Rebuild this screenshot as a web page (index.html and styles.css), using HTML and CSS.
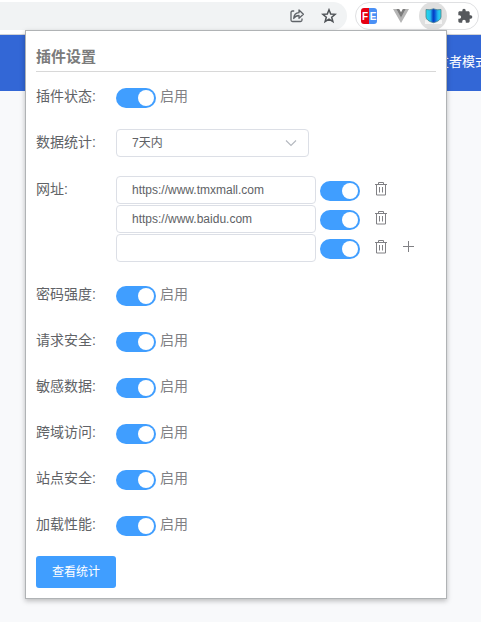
FILE: index.html
```html
<!DOCTYPE html>
<html lang="zh-CN">
<head>
<meta charset="utf-8">
<title>插件设置</title>
<link rel="stylesheet" href="styles.css">
</head>
<body>
<svg class="defs" width="0" height="0">
  <symbol id="trash" viewBox="0 0 14 14"><path d="M1 2.500h12M4.500 2.500v-2h5v2M2.500 2.500v10.500h9V2.500M5.500 5v5.500M8.500 5v5.500" fill="none" stroke="currentColor"/></symbol>
</svg>
<header class="toolbar">
  <div class="address">
    <svg width="16" height="16" viewBox="0 0 16 16" fill="none" stroke="#5f6368" stroke-width="1.3" stroke-linejoin="round"><path d="M5.200 3H3.500Q2 3 2 4.500v7.500Q2 13.500 3.500 13.500h8q1.500 0 1.500-1.500V10.500"/><path d="M4.700 10.500Q5 5 10 4.700V2L14.400 6.300 10 10.200V7.500Q6.600 7.500 4.700 10.500z"/></svg>
    <svg width="16" height="16" viewBox="0 0 16 16" fill="none" stroke="#505458" stroke-width="1.500"><path d="M8 1.800 9.700 6l4.500.3-3.500 2.900 1.200 4.500L8 11.200l-3.900 2.500 1.200-4.500L1.800 6.300 6.300 6z"/></svg>
  </div>
  <div class="extensions">
    <span class="fe"><b>F</b><b>E</b></span>
    <svg class="vue" width="16" height="14" viewBox="0 0 16 14"><path d="M0 0h3.300L8 8.500 12.700 0H16L8 14z" fill="#b5b5b5"/><path d="M3.200 0h3L8 3.200 9.800 0h3L8 8.700z" fill="#7d7d7d"/></svg>
    <span class="active-ext">
      <svg width="17" height="16" viewBox="0 0 17 16">
        <defs><linearGradient id="shade" gradientUnits="userSpaceOnUse" x1="1" y1="0" x2="16" y2="0"><stop offset="0" stop-color="#24dbe9"/><stop offset=".28" stop-color="#25bff0"/><stop offset=".48" stop-color="#063cc2"/><stop offset=".58" stop-color="#0754d4"/><stop offset=".8" stop-color="#24b9f0"/><stop offset="1" stop-color="#24dbe9"/></linearGradient></defs>
        <path d="M0 12h17v4H0z" fill="#f4f4f4"/><path d="M1 1.500Q5 2.500 8.500.8 12 2.500 16 1.500V9q-.5 4-7.500 5.700Q1.500 13 1 9z" fill="url(#shade)" stroke="#4b7e88" stroke-width=".8"/>
      </svg>
    </span>
    <svg class="puzzle" width="16" height="16" viewBox="0 0 24 24"><path d="M20.500 11H19V7c0-1.100-.9-2-2-2h-4V3.500a2.500 2.500 0 0 0-5 0V5H4c-1.100 0-2 .9-2 2v3.800h1.500a2.700 2.700 0 0 1 0 5.400H2V20c0 1.100.9 2 2 2h3.800v-1.500a2.700 2.700 0 0 1 5.400 0V22H17c1.100 0 2-.9 2-2v-4h1.500a2.500 2.500 0 0 0 0-5z" fill="#56595d"/></svg>
  </div>
</header>
<div class="banner"><span>开发者模式</span></div>

<main class="popup">
  <h1>插件设置</h1>
  <div class="row"><label>插件状态:</label><i class="switch"></i><span class="state">启用</span></div>
  <div class="row range"><label>数据统计:</label>
    <div class="field select"><span>7天内</span><svg width="12" height="12" viewBox="0 0 12 12" fill="none" stroke="#b4b8bf" stroke-width="1.100"><path d="M1 3.500 6 8.500l5-5"/></svg></div>
  </div>
  <div class="row sites"><label>网址:</label>
    <div class="site-list">
      <div class="site"><div class="field">https://www.tmxmall.com</div><i class="switch"></i><svg class="trash"><use href="#trash"/></svg></div>
      <div class="site"><div class="field">https://www.baidu.com</div><i class="switch"></i><svg class="trash"><use href="#trash"/></svg></div>
      <div class="site"><div class="field"></div><i class="switch"></i><svg class="trash"><use href="#trash"/></svg><svg class="plus" viewBox="0 0 12 12"><path d="M0 5.500h11M5.500 0v11" stroke="#808084"/></svg></div>
    </div>
  </div>
  <div class="row"><label>密码强度:</label><i class="switch"></i><span class="state">启用</span></div>
  <div class="row"><label>请求安全:</label><i class="switch"></i><span class="state">启用</span></div>
  <div class="row"><label>敏感数据:</label><i class="switch"></i><span class="state">启用</span></div>
  <div class="row"><label>跨域访问:</label><i class="switch"></i><span class="state">启用</span></div>
  <div class="row"><label>站点安全:</label><i class="switch"></i><span class="state">启用</span></div>
  <div class="row"><label>加载性能:</label><i class="switch"></i><span class="state">启用</span></div>
  <button>查看统计</button>
</main>
</body>
</html>
```
FILE: styles.css
```css
* { box-sizing: border-box; }
body {
  margin: 0;
  height: 622px;
  overflow: hidden;
  background: #f8f9fb;
  font-family: "Liberation Sans", "Noto Sans CJK SC", sans-serif;
}
.defs { position: absolute; }
svg { display: block; flex: none; }
.toolbar {
  display: flex;
  height: 35px;
  padding-top: 2px;
  background: #fff;
  border-bottom: 1px solid #d2d3d5;
}
.address {
  display: flex;
  justify-content: flex-end;
  gap: 16px;
  width: 347px;
  height: 28px;
  padding: 6px 10px 0 0;
  border-radius: 0 14px 14px 0;
  background: #f1f3f4;
}
.extensions {
  display: flex;
  align-items: center;
  width: 124px;
  height: 28px;
  margin-left: 8px;
  padding-left: 5px;
  border: 1px solid #dfe0e2;
  border-radius: 14px;
}
.fe {
  display: flex;
  width: 16px;
  height: 16px;
  border-radius: 3px;
  overflow: hidden;
  background: linear-gradient(90deg, #e60012 50%, #4a90f5 50%);
  color: #fff;
  font-size: 10px;
  line-height: 17px;
}
.fe b { width: 8px; text-align: center; }
.vue { margin-left: 16px; }
.active-ext {
  display: flex;
  align-items: center;
  justify-content: center;
  width: 28px;
  height: 28px;
  margin-left: 10px;
  border-radius: 50%;
  background: #dfdfdf;
}
.puzzle { margin-left: 10px; }
.banner {
  display: flex;
  justify-content: flex-end;
  height: 56px;
  background: #3367d6;
  color: #fff;
  font-size: 13px;
  line-height: 54px;
}
.banner span { margin-right: -7px; white-space: nowrap; }
.popup {
  position: absolute;
  left: 25px;
  top: 30px;
  width: 422px;
  height: 569px;
  padding: 10px;
  border: 1px solid #b0b3b5;
  background: #fff;
  box-shadow: 0 2px 5px rgba(0, 0, 0, .25);
  color: #606266;
}
h1 {
  height: 31px;
  margin: 0 0 10px;
  border-bottom: 1px solid #d8d8d8;
  color: #7b7b7b;
  font-size: 15px;
  font-weight: 700;
  line-height: 31px;
}
.row {
  display: flex;
  height: 28px;
  margin-bottom: 18px;
  font-size: 14px;
  line-height: 28px;
}
label { width: 80px; flex: none; }
.switch {
  position: relative;
  flex: none;
  width: 40px;
  height: 20px;
  margin-top: 6px;
  border-radius: 10px;
  background: #409eff;
}
.switch::after {
  content: "";
  position: absolute;
  top: 2px;
  right: 2px;
  width: 16px;
  height: 16px;
  border-radius: 50%;
  background: #fff;
}
.state { margin-left: 4px; color: #808084; }
.field {
  width: 200px;
  height: 28px;
  padding: 0 15px;
  border: 1px solid #dcdfe6;
  border-radius: 4px;
  font-size: 12px;
  line-height: 26px;
}
.range { height: 29px; }
.select {
  display: flex;
  justify-content: space-between;
  align-items: center;
  width: 193px;
  margin-top: 1px;
  padding-right: 11px;
}
.sites { height: 87px; }
.site-list { padding-top: 1px; }
.site { display: flex; height: 29px; }
.site .switch { margin: 5px 0 0 4px; }
.trash { width: 14px; height: 14px; margin: 6px 0 0 14px; color: #808084; }
.plus { width: 12px; height: 12px; margin: 7px 0 0 15px; }
button {
  display: block;
  width: 80px;
  height: 32px;
  padding: 0;
  border: 0;
  border-radius: 3px;
  background: #409eff;
  color: #fff;
  font-family: inherit;
  font-size: 12px;
  line-height: 32px;
}
```
